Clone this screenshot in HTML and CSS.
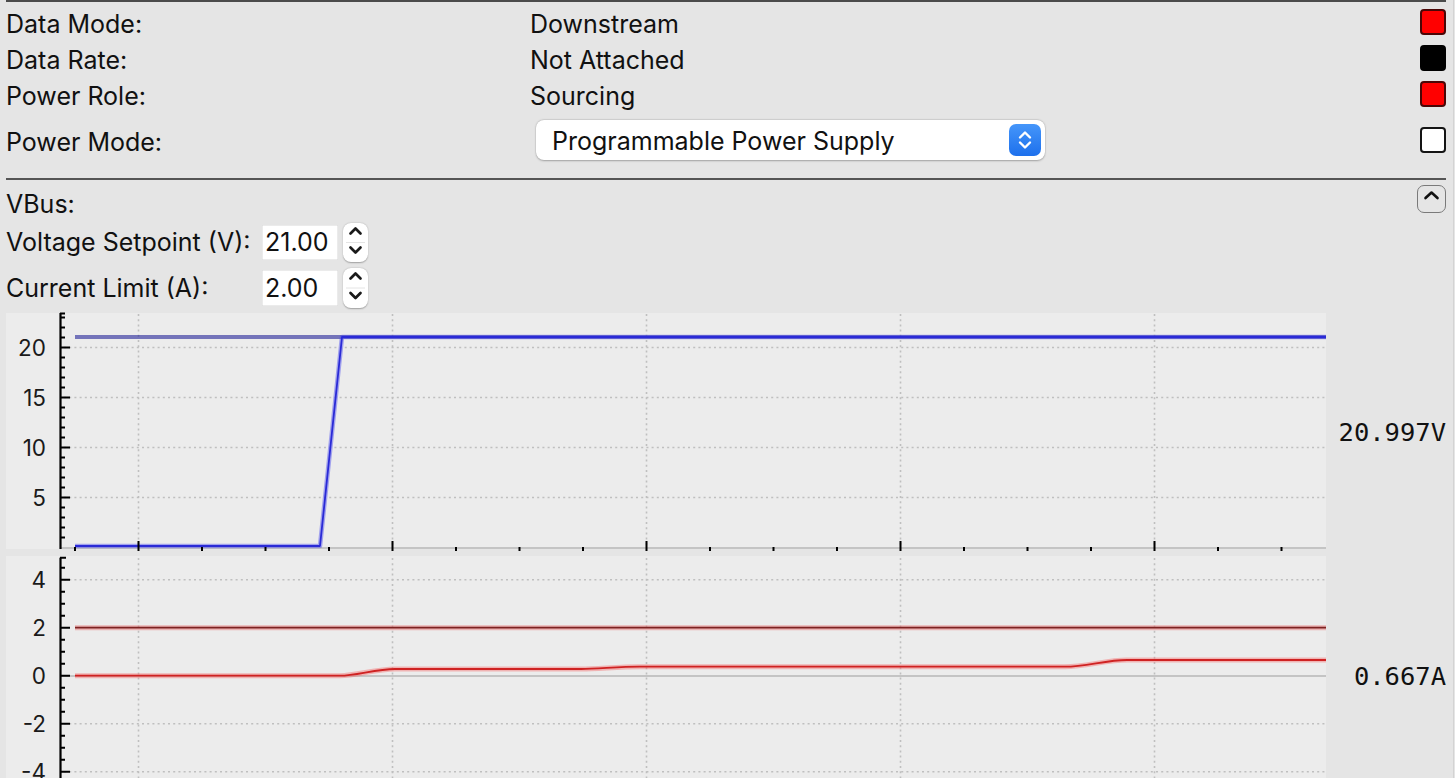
FILE: index.html
```html
<!DOCTYPE html>
<html lang="en">
<head>
<meta charset="utf-8">
<title>USB-C Port</title>
<link rel="stylesheet" href="styles.css">
</head>
<body>
<div class="window">
  <section class="status">
    <div class="row">
      <span class="label">Data Mode:</span>
      <span class="value">Downstream</span>
      <span class="ind ind-red"></span>
    </div>
    <div class="row">
      <span class="label">Data Rate:</span>
      <span class="value">Not Attached</span>
      <span class="ind ind-black"></span>
    </div>
    <div class="row">
      <span class="label">Power Role:</span>
      <span class="value">Sourcing</span>
      <span class="ind ind-red"></span>
    </div>
    <div class="row row-mode">
      <span class="label">Power Mode:</span>
      <div class="value-cell">
        <div class="select">
          <span class="select-text">Programmable Power Supply</span>
          <span class="select-btn">
            <svg width="32" height="32" viewBox="0 0 32 32"><path d="M11 13.5 L16 8.5 L21 13.5 M11 18.5 L16 23.5 L21 18.5" fill="none" stroke="#fff" stroke-width="2.4" stroke-linecap="round" stroke-linejoin="round"/></svg>
          </span>
        </div>
      </div>
      <span class="ind ind-white"></span>
    </div>
  </section>

  <section class="vbus">
    <div class="vbus-head">
      <span class="vbus-title">VBus:</span>
      <span class="collapse">
        <svg width="29" height="28" viewBox="0 0 29 28"><path d="M8.5 13 L14.5 7.5 L20.5 13" fill="none" stroke="#111" stroke-width="2.6" stroke-linecap="round" stroke-linejoin="round"/></svg>
      </span>
    </div>
    <div class="field field-v">
      <span class="flabel">Voltage Setpoint (V):</span>
      <span class="input">21.00</span>
      <span class="spin">
        <svg width="25" height="39" viewBox="0 0 25 39"><path d="M3 19.5 H22" stroke="#e4e4e4" stroke-width="1"/><path d="M7.5 10.5 L12.5 5.5 L17.5 10.5 M7.5 24.5 L12.5 29.5 L17.5 24.5" fill="none" stroke="#1a1a1a" stroke-width="2.7" stroke-linecap="round" stroke-linejoin="round"/></svg>
      </span>
    </div>
    <div class="field field-a">
      <span class="flabel">Current Limit (A):</span>
      <span class="input">2.00</span>
      <span class="spin spin-a">
        <svg width="25" height="40" viewBox="0 0 25 40"><path d="M3 20 H22" stroke="#e4e4e4" stroke-width="1"/><path d="M7.5 10.5 L12.5 5.5 L17.5 10.5 M7.5 25 L12.5 30 L17.5 25" fill="none" stroke="#1a1a1a" stroke-width="2.7" stroke-linecap="round" stroke-linejoin="round"/></svg>
      </span>
    </div>
  </section>

  <div class="chart-row chart-v">
    <svg class="chart" width="1320" height="240" viewBox="0 0 1320 240">
      <rect x="0" y="1" width="1320" height="236" fill="#ececec"/>
      <g stroke="#bfbfbf" stroke-width="1.6" stroke-dasharray="2 3.2" fill="none">
        <path d="M132.5 2 V236 M386.5 2 V236 M640.5 2 V236 M894.5 2 V236 M1148.5 2 V236"/>
        <path d="M58 35.5 H1320 M58 85.5 H1320 M58 135.5 H1320 M58 185.5 H1320"/>
      </g>
      <path d="M54 236 H1320" stroke="#c4c4c4" stroke-width="2"/>
      <path d="M69 25 H1320" stroke="rgba(30,30,150,0.58)" stroke-width="4" fill="none"/>
      <path d="M69 234 L314 234 L336 25 L1320 25" stroke="rgba(70,70,240,0.45)" stroke-width="4.5" fill="none" stroke-linejoin="round"/>
      <path d="M69 234 L314 234 L336 25 L1320 25" stroke="#2a2ad6" stroke-width="1.8" fill="none" stroke-linejoin="round"/>
      <path d="M54.5 1 V237" stroke="#000" stroke-width="2.2"/>
      <g stroke="#000" stroke-width="2">
        <path d="M54 1.5 H59 M54 35.5 H64 M54 85.5 H64 M54 135.5 H64 M54 185.5 H64"/>
        <path d="M54 5.5 H59 M54 15.5 H59 M54 25.5 H59 M54 45.5 H59 M54 55.5 H59 M54 65.5 H59 M54 75.5 H59 M54 95.5 H59 M54 105.5 H59 M54 115.5 H59 M54 125.5 H59 M54 145.5 H59 M54 155.5 H59 M54 165.5 H59 M54 175.5 H59 M54 195.5 H59 M54 205.5 H59 M54 215.5 H59 M54 225.5 H59"/>
        <path d="M132.5 229 V239 M386.5 229 V239 M640.5 229 V239 M894.5 229 V239 M1148.5 229 V239"/>
        <path d="M69 235 V239 M196 235 V239 M259.5 235 V239 M323 235 V239 M450 235 V239 M513.5 235 V239 M577 235 V239 M704 235 V239 M767.5 235 V239 M831 235 V239 M958 235 V239 M1021.5 235 V239 M1085 235 V239 M1212 235 V239 M1275.5 235 V239"/>
      </g>
      <g class="tick-label" text-anchor="end">
        <text x="40" y="43.5">20</text>
        <text x="40" y="93.5">15</text>
        <text x="40" y="143.5">10</text>
        <text x="40" y="193.5">5</text>
      </g>
    </svg>
    <div class="readout">20.997V</div>
  </div>

  <div class="chart-row chart-a">
    <svg class="chart" width="1320" height="240" viewBox="0 0 1320 240">
      <rect x="0" y="0" width="1320" height="240" fill="#ececec"/>
      <g stroke="#bfbfbf" stroke-width="1.6" stroke-dasharray="2 3.2" fill="none">
        <path d="M132.5 2 V240 M386.5 2 V240 M640.5 2 V240 M894.5 2 V240 M1148.5 2 V240"/>
        <path d="M58 23.7 H1320 M58 167.7 H1320 M58 215.7 H1320"/>
      </g>
      <path d="M54 120 H1320" stroke="#c4c4c4" stroke-width="2"/>
      <path d="M69 71.7 H1320" stroke="rgba(235,110,110,0.45)" stroke-width="5" fill="none"/>
      <path d="M69 71.7 H1320" stroke="#7e2222" stroke-width="1.8" fill="none"/>
      <path d="M69 119.7 L334 119.7 C350 119.7 370 113 389 113 L575 113 C592 113 612 110.7 634 110.7 L1059 110.7 C1080 110.7 1100 104 1121 104 L1320 104" stroke="rgba(245,100,100,0.42)" stroke-width="5" fill="none"/>
      <path d="M69 119.7 L334 119.7 C350 119.7 370 113 389 113 L575 113 C592 113 612 110.7 634 110.7 L1059 110.7 C1080 110.7 1100 104 1121 104 L1320 104" stroke="#cf2222" stroke-width="1.8" fill="none"/>
      <path d="M54.5 1.7 V240" stroke="#000" stroke-width="2.2"/>
      <g stroke="#000" stroke-width="2">
        <path d="M54 1.7 H60 M54 23.7 H64 M54 71.7 H64 M54 119.7 H64 M54 167.7 H64 M54 215.7 H64"/>
        <path d="M54 11.7 H59 M54 35.7 H59 M54 47.7 H59 M54 59.7 H59 M54 83.7 H59 M54 95.7 H59 M54 107.7 H59 M54 131.7 H59 M54 143.7 H59 M54 155.7 H59 M54 179.7 H59 M54 191.7 H59 M54 203.7 H59 M54 227.7 H59"/>
      </g>
      <g class="tick-label" text-anchor="end">
        <text x="40" y="31.7">4</text>
        <text x="40" y="79.7">2</text>
        <text x="40" y="127.7">0</text>
        <text x="40" y="175.7">-2</text>
        <text x="40" y="223.7">-4</text>
      </g>
    </svg>
    <div class="readout">0.667A</div>
  </div>
</div>
</body>
</html>
```

FILE: styles.css
```css
html, body {
  margin: 0;
  padding: 0;
  background: #e5e5e5;
  height: 778px;
  overflow: hidden;
}

.window {
  box-sizing: border-box;
  width: 1454px;
  height: 778px;
  padding: 0 7px 0 6px;
  border-right: 1px solid #d3d3d3;
  font-family: Inter, "Noto Sans", "Liberation Sans", sans-serif;
  font-size: 25px;
  color: #111;
  overflow: hidden;
}

/* ---------- status block ---------- */
.status {
  border-top: 2px solid #4b4b4b;
  padding-top: 2px;
  padding-bottom: 10px;
}

.row {
  display: grid;
  grid-template-columns: 524px 1fr 26px;
  align-items: center;
  height: 36px;
}

.row-mode {
  height: 56px;
}

.label,
.value {
  line-height: 30px;
  padding-top: 4px;
  white-space: nowrap;
}

.ind {
  box-sizing: border-box;
  width: 26px;
  height: 26px;
  border-radius: 4px;
  border: 2px solid #1a1a1a;
}

.ind-red {
  background: #ff0000;
  border-color: #4a0606;
}

.ind-black {
  background: #000;
  border-color: #000;
}

.ind-white {
  background: #fff;
  border-color: #141414;
}

.value-cell {
  display: flex;
  align-items: center;
}

.select {
  box-sizing: border-box;
  margin-left: 6px;
  width: 509px;
  height: 40px;
  background: #fff;
  border-radius: 8px;
  box-shadow: 0 0.5px 2px rgba(0, 0, 0, 0.28), 0 0 0 0.5px rgba(0, 0, 0, 0.06);
  display: flex;
  align-items: center;
  justify-content: space-between;
  padding: 0 4px 0 16px;
}

.select-text {
  line-height: 30px;
  padding-top: 2px;
}

.select-btn {
  width: 32px;
  height: 32px;
  border-radius: 7px;
  background: linear-gradient(#4596fa, #1d70ec);
  display: flex;
}

/* ---------- vbus block ---------- */
.vbus {
  border-top: 2px solid #555;
}

.vbus-head {
  height: 40px;
  display: flex;
  justify-content: space-between;
  align-items: flex-start;
}

.vbus-title {
  line-height: 30px;
  padding-top: 9px;
}

.collapse {
  box-sizing: border-box;
  margin-top: 5px;
  width: 29px;
  height: 28px;
  border: 1.5px solid #7a7a7a;
  border-radius: 7px;
  display: flex;
  align-items: center;
  justify-content: center;
}

.collapse svg {
  flex: none;
}

.field {
  display: flex;
  align-items: center;
}

.field-v {
  height: 44px;
}

.field-a {
  height: 48px;
}

.flabel {
  width: 256px;
  line-height: 30px;
  white-space: nowrap;
}

.input {
  box-sizing: border-box;
  width: 76px;
  height: 35px;
  background: #fff;
  padding-left: 3px;
  line-height: 35px;
  box-shadow: inset 0 0 0 0.5px #d8d8d8;
}

.field-a .input {
  height: 36px;
  line-height: 36px;
}

.spin {
  margin-left: 5px;
  width: 25px;
  height: 39px;
  background: #fff;
  border-radius: 8px;
  box-shadow: 0 0.5px 1.5px rgba(0, 0, 0, 0.3);
  display: flex;
}

.spin-a {
  height: 40px;
}

/* ---------- charts ---------- */
.chart-row {
  display: flex;
  align-items: center;
  height: 240px;
}

.chart-v {
  margin-bottom: 4px;
}

.chart {
  display: block;
  flex: none;
}

.tick-label {
  font-family: Inter, "Liberation Sans", sans-serif;
  font-size: 22.5px;
  fill: #1a1a1a;
}

.readout {
  flex: 1;
  text-align: right;
  font-family: "DejaVu Sans Mono", "Liberation Mono", monospace;
  font-size: 25.5px;
  color: #111;
  line-height: 30px;
}
```
